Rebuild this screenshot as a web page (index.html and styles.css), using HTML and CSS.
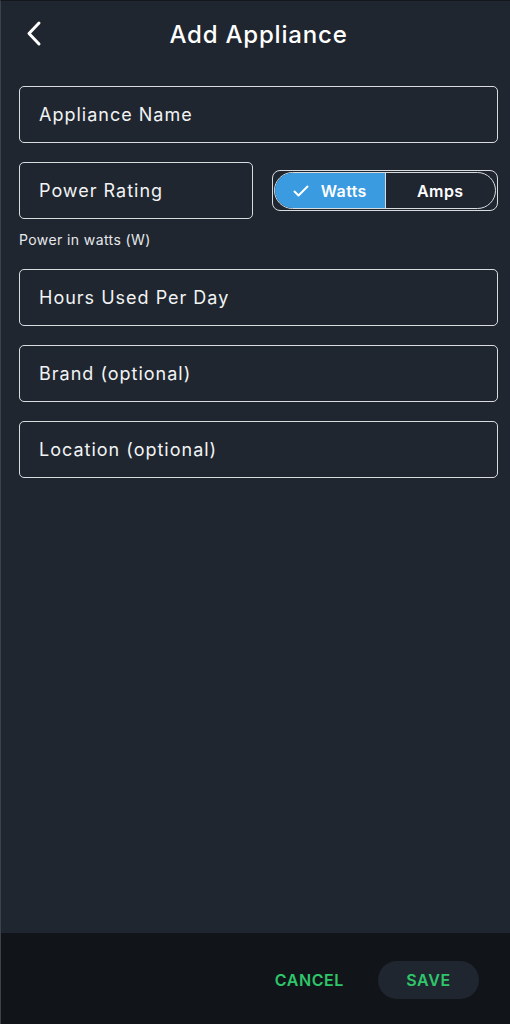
FILE: index.html
```html
<!DOCTYPE html>
<html lang="en">
<head>
    <meta charset="UTF-8">
    <meta name="viewport" content="width=device-width, initial-scale=1.0">
    <title>Add Appliance</title>
    <link rel="stylesheet" href="styles.css">
</head>
<body>
    <div class="screen">
        <header class="top-bar">
            <button class="back-btn" aria-label="Back">
                <svg width="18" height="28" viewBox="0 0 18 28">
                    <path d="M14 3 L4 13.5 L14 24" fill="none" stroke="#fff" stroke-width="3" stroke-linecap="round" stroke-linejoin="round"/>
                </svg>
            </button>
            <h1 class="title">Add Appliance</h1>
        </header>

        <main class="form">
            <div class="field">Appliance Name</div>

            <div class="power-row">
                <div class="field field-half">Power Rating</div>
                <div class="unit-toggle">
                    <div class="segments">
                        <div class="segment active">
                            <svg width="16" height="12" viewBox="0 0 16 12">
                                <path d="M1.5 6.5 L5.5 10.5 L14.5 1.5" fill="none" stroke="#fff" stroke-width="2" stroke-linecap="round" stroke-linejoin="round"/>
                            </svg>
                            Watts
                        </div>
                        <div class="segment">Amps</div>
                    </div>
                </div>
            </div>
            <div class="helper">Power in watts (W)</div>

            <div class="field">Hours Used Per Day</div>
            <div class="field">Brand (optional)</div>
            <div class="field">Location (optional)</div>
        </main>

        <footer class="actions">
            <button class="btn-text">CANCEL</button>
            <button class="btn-save">SAVE</button>
        </footer>
    </div>
</body>
</html>
```

FILE: styles.css
```css
/* base */
body {
    margin: 0;
    padding: 0;
    background: #1f2630;
    font-family: 'Inter', 'Noto Sans', sans-serif;
    color: #ffffff;
    overflow: hidden;
}

.screen {
    display: flex;
    flex-direction: column;
    height: 1024px;
    box-sizing: border-box;
    border-left: 1px solid #3d4248;
    border-top: 1px solid #14181d;
    background: #1f2630;
}

/* header */
.top-bar {
    height: 67px;
    position: relative;
    display: flex;
    align-items: center;
    justify-content: center;
}

.back-btn {
    position: absolute;
    left: 24px;
    top: 19px;
    background: none;
    border: none;
    padding: 0;
    cursor: pointer;
}

.title {
    margin: 0;
    font-size: 24px;
    font-weight: 500;
    letter-spacing: 0.8px;
    padding-left: 6px;
}

/* form */
.form {
    flex: 1;
    display: flex;
    flex-direction: column;
    gap: 19px;
    padding: 18px 12px 0 18px;
}

.field {
    height: 57px;
    box-sizing: border-box;
    border: 1px solid #d9dcdf;
    border-radius: 5px;
    display: flex;
    align-items: center;
    padding-left: 19px;
    font-size: 18px;
    letter-spacing: 1px;
    color: #f2f3f4;
}

.power-row {
    display: flex;
    align-items: center;
    gap: 19px;
}

.field-half {
    width: 234px;
}

.unit-toggle {
    flex: 1;
    height: 41px;
    box-sizing: border-box;
    border: 1px solid #d9dcdf;
    border-radius: 8px;
    padding: 1px;
}

.segments {
    display: flex;
    height: 100%;
    box-sizing: border-box;
    border: 1px solid #d9dcdf;
    border-radius: 19px;
    overflow: hidden;
}

.segment {
    flex: 1;
    display: flex;
    align-items: center;
    justify-content: center;
    gap: 12px;
    font-size: 16px;
    font-weight: 600;
    letter-spacing: 0.4px;
}

.segment.active {
    background: #3a9be0;
    border-right: 1px solid #d9dcdf;
}

.helper {
    font-size: 14px;
    line-height: 17px;
    color: #e6e8ea;
    margin-top: -7px;
    margin-bottom: 2px;
    letter-spacing: 0.4px;
}

/* footer */
.actions {
    height: 91px;
    background: #111519;
    display: flex;
    align-items: center;
    justify-content: flex-end;
    gap: 34px;
    padding-right: 31px;
    padding-top: 3px;
    box-sizing: border-box;
}

.actions button {
    font-family: 'Inter', 'Noto Sans', sans-serif;
    font-size: 16px;
    font-weight: 600;
    letter-spacing: 0.6px;
    color: #2fc66a;
    border: none;
    cursor: pointer;
}

.btn-text {
    background: none;
    padding: 0;
}

.btn-save {
    background: #1f2630;
    width: 101px;
    height: 38px;
    border-radius: 19px;
}
```
